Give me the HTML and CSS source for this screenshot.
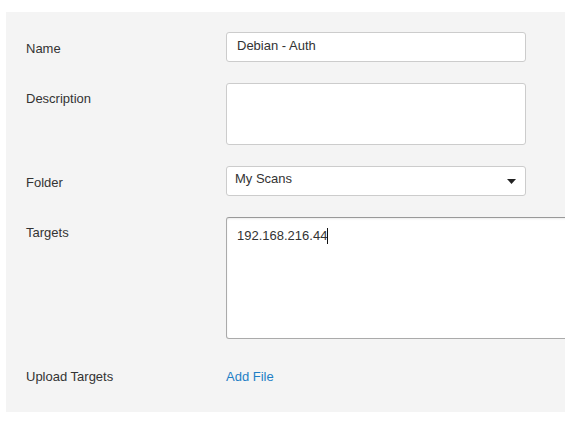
FILE: index.html
```html
<!DOCTYPE html>
<html>
<head>
<meta charset="utf-8">
<link rel="stylesheet" href="styles.css">
</head>
<body>
<div class="panel">
  <div class="row">
    <div class="label">Name</div>
    <div class="field"><div class="input">Debian - Auth</div></div>
  </div>
  <div class="row">
    <div class="label label-top">Description</div>
    <div class="field"><div class="input textarea-desc"></div></div>
  </div>
  <div class="row">
    <div class="label">Folder</div>
    <div class="field">
      <div class="input select">
        <span class="select-text">My Scans</span>
        <svg class="caret" width="9" height="5" viewBox="0 0 9 5"><path d="M0 0H9L4.5 5Z" fill="#222"/></svg>
      </div>
    </div>
  </div>
  <div class="row">
    <div class="label label-top">Targets</div>
    <div class="field"><div class="input textarea-targets"><span>192.168.216.44</span><span class="cursor"></span></div></div>
  </div>
  <div class="row">
    <div class="label">Upload Targets</div>
    <div class="field"><a class="link" href="#">Add File</a></div>
  </div>
</div>
</body>
</html>
```
FILE: styles.css
```css
html, body {
  margin: 0;
  padding: 0;
  background: #fff;
  overflow: hidden;
}
body {
  font-family: "Liberation Sans", Arial, sans-serif;
  font-size: 13px;
  color: #333;
}
.panel {
  box-sizing: border-box;
  margin: 12px 0 0 6px;
  width: calc(100% - 6px);
  overflow: hidden;
  background: #f4f4f4;
  padding: 20px 0 22px 20px;
  display: flex;
  flex-direction: column;
  gap: 21px;
}
.row {
  display: flex;
  align-items: flex-start;
}
.label {
  box-sizing: border-box;
  width: 200px;
  flex: none;
  height: 30px;
  line-height: 27px;
  padding-top: 3px;
}
.label-top {
  height: auto;
  line-height: 16px;
  padding-top: 8px;
}
.input {
  box-sizing: border-box;
  width: 300px;
  height: 30px;
  background: #fff;
  border: 1px solid #ccc;
  border-radius: 3px;
  padding: 0 10px;
  line-height: 25px;
}
.textarea-desc {
  height: 62px;
}
.select {
  display: flex;
  align-items: center;
  justify-content: space-between;
  padding: 0 9px 0 8px;
}
.select-text {
  line-height: 26px;
  position: relative;
  top: -2px;
}
.caret {
  display: block;
  margin-top: 1px;
}
.textarea-targets {
  width: 420px;
  height: 122px;
  border-color: #aaa;
  border-top-color: #999;
  box-shadow: inset 0 1px 2px rgba(0,0,0,0.08);
  padding: 10px 10px;
  line-height: 16px;
  display: flex;
  align-items: flex-start;
}
.cursor {
  display: inline-block;
  width: 1px;
  height: 16px;
  background: #111;
}
.link {
  color: #1f7fc6;
  text-decoration: none;
  display: block;
  line-height: 27px;
  padding-top: 3px;
}
```
